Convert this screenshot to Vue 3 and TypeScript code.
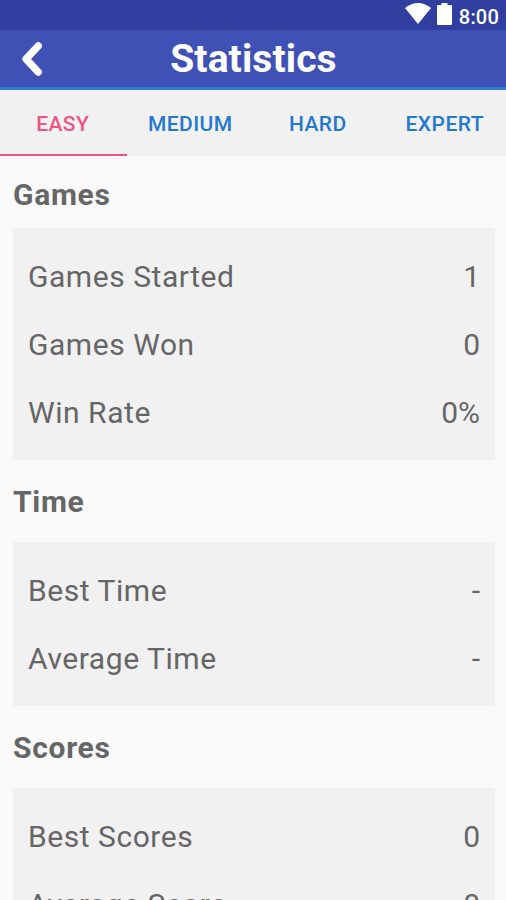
<script setup lang="ts">
interface Stat { label: string; value: string }
interface Section { title: string; stats: Stat[] }

const tabs: string[] = ['EASY', 'MEDIUM', 'HARD', 'EXPERT']
const sections: Section[] = [
  {
    title: 'Games',
    stats: [
      { label: 'Games Started', value: '1' },
      { label: 'Games Won', value: '0' },
      { label: 'Win Rate', value: '0%' },
    ],
  },
  {
    title: 'Time',
    stats: [
      { label: 'Best Time', value: '-' },
      { label: 'Average Time', value: '-' },
    ],
  },
  {
    title: 'Scores',
    stats: [
      { label: 'Best Scores', value: '0' },
      { label: 'Average Score', value: '0' },
    ],
  },
]
</script>

<template>
  <div class="screen">
    <div class="status">
      <svg class="wifi" width="26" height="21" viewBox="0 0 26 21"><path d="M0 5Q13 -5 26 5L13 21Z" fill="#fff" /></svg>
      <svg class="battery" width="15" height="22" viewBox="0 0 15 22"><path d="M4.500 0h6v2h3.500q1 0 1 1V21q0 1-1 1H1q-1 0-1-1V3q0-1 1-1h3.500z" fill="#fff" /></svg>
      <span class="clock">8:00</span>
    </div>
    <header class="bar">
      <svg class="back" width="22" height="36" viewBox="0 0 22 36"><path d="M17.200 5L5 18L17.200 31" fill="none" stroke="#fff" stroke-width="7.400" stroke-linecap="round" stroke-linejoin="round" /></svg>
      <h1>Statistics</h1>
    </header>
    <nav class="tabs">
      <div v-for="(tab, i) in tabs" :key="tab" class="tab" :class="{ active: i === 0 }">{{ tab }}</div>
    </nav>
    <main>
      <section v-for="s in sections" :key="s.title">
        <h2>{{ s.title }}</h2>
        <div class="card">
          <div v-for="r in s.stats" :key="r.label" class="row">
            <span class="label">{{ r.label }}</span><span>{{ r.value }}</span>
          </div>
        </div>
      </section>
    </main>
  </div>
</template>

<style>
body { margin: 0; overflow: hidden; }
</style>

<style scoped>
.screen { width: 506px; height: 900px; overflow: hidden; background: #fafafa; font-family: Roboto, sans-serif; color: #666; }
.status { height: 30px; box-sizing: border-box; background: #303f9f; display: flex; justify-content: flex-end; align-items: flex-start; padding: 3px 7px 0 0; color: #fff; }
.wifi { margin-right: 0.5px; }
.battery { margin-left: 5px; }
.clock { margin-left: 7px; font-size: 20px; line-height: 29px; font-weight: 500; letter-spacing: 0.2px; }
.bar { height: 60px; box-sizing: border-box; background: #3f51b5; border-bottom: 3px solid #2f7ccd; display: grid; place-items: center; }
.bar > * { grid-area: 1 / 1; }
.back { justify-self: start; margin-left: 20.5px; margin-top: 1px; }
h1 { margin: 1px 0 0 1px; color: #fff; font-size: 39px; line-height: 56px; font-weight: 700; letter-spacing: 0.1px; }
.tabs { height: 66px; display: grid; grid-template-columns: repeat(4, 1fr); background: #f1f1f1; }
.tab { box-sizing: border-box; height: 66px; font-size: 21px; font-weight: 500; line-height: 68px; text-align: center; color: #2478cf; letter-spacing: 0.45px; padding-left: 1px; white-space: nowrap; }
.tab:nth-child(3) { padding-left: 3px; }
.tab:nth-child(4) { padding-left: 4px; }
.active { color: #f05484; border-bottom: 2px solid #f05484; padding: 0 1px 0 0; }
main { padding: 0 11px 0 13px; }
h2 { margin: 0; height: 72px; font-size: 30px; line-height: 78px; font-weight: 700; letter-spacing: 0.7px; }
.card { background: #f1f1f1; padding: 14px 15px; }
section + section h2 { height: 82px; line-height: 84px; }
.row { height: 68px; line-height: 70px; font-size: 30px; display: flex; justify-content: space-between; }
.label { letter-spacing: 0.55px; }
</style>
